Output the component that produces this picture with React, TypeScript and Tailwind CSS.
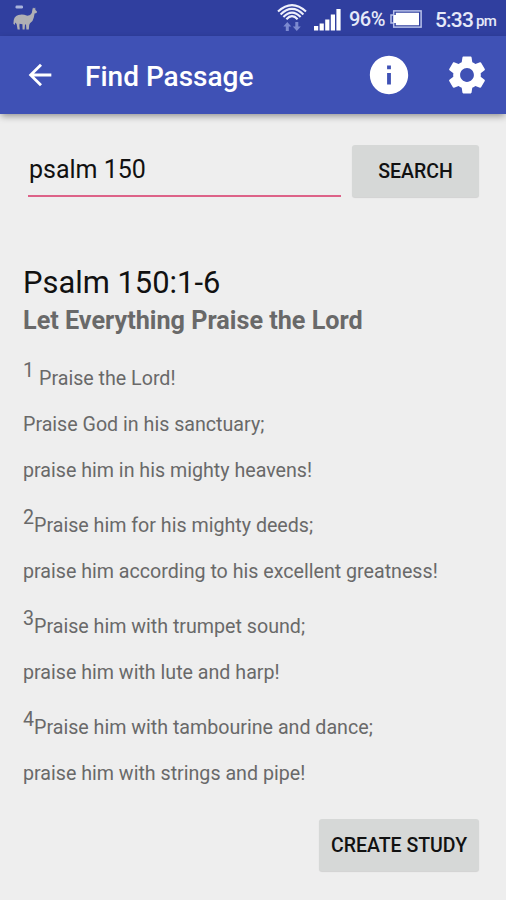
import React from "react";
import { MdArrowBack, MdInfo, MdSettings } from "react-icons/md";

const verses = [
  { number: "1", gap: true, lines: ["Praise the Lord!", "Praise God in his sanctuary;", "praise him in his mighty heavens!"] },
  { number: "2", gap: false, lines: ["Praise him for his mighty deeds;", "praise him according to his excellent greatness!"] },
  { number: "3", gap: false, lines: ["Praise him with trumpet sound;", "praise him with lute and harp!"] },
  { number: "4", gap: false, lines: ["Praise him with tambourine and dance;", "praise him with strings and pipe!"] },
];

function LlamaIcon() {
  return (
    <svg width="26" height="30" viewBox="0 0 26 30" fill="#b0b0b4">
      <rect x="3.5" y="2.5" width="7.5" height="3" rx="1.2" fill="#aab4dc" />
      <path d="M20.4 6.6 L21 4.6 L22 5.4 L23.2 4.4 L23.4 7 L25 8.4 L24.6 10 L22.6 10.4 L21.8 14.4 Q21.2 18 18 20.2 L17.2 22 L16.8 26.6 H14.4 L14 21.4 L13 21.4 L12.6 26.6 H10.6 L10.4 21.2 L7.6 20.8 L7.4 23 L7.8 26.6 H5.6 L4.6 21 L3.2 19.6 L2.8 22 L1.4 20.8 Q1.2 13 6.4 12 Q11 11 14.6 12.6 Q18.4 13 19.8 10 Z" />
    </svg>
  );
}

function WifiIcon() {
  return (
    <svg width="30" height="28" viewBox="0 0 30 28" fill="none">
      <g stroke="#eef0fb" strokeWidth="2.1">
        <path d="M1 7.6 Q15 -5.2 29 7.6" />
        <path d="M3.6 10.4 Q15 -0.6 26.4 10.4" />
        <path d="M6.4 13 Q15 4.2 23.6 13" />
        <path d="M9.4 15.2 Q15 9 20.6 15.2" />
      </g>
      <g fill="#7c8ad0">
        <path d="M10.3 18 L14.3 22.4 H11.8 V27 H8.8 V22.4 H6.3 Z" />
        <path d="M19.8 27 L23.8 22.6 H21.3 V18 H18.3 V22.6 H15.8 Z" />
      </g>
    </svg>
  );
}

function SignalIcon() {
  return (
    <svg width="28" height="24" viewBox="0 0 28 24" fill="#fff">
      <rect x="0" y="18" width="4.2" height="4.5" />
      <rect x="5.6" y="15.5" width="4.2" height="7" />
      <rect x="11.2" y="11.5" width="4.2" height="11" />
      <rect x="16.8" y="6.5" width="4.2" height="16" />
      <rect x="22.4" y="1" width="4.2" height="21.5" />
    </svg>
  );
}

function BatteryIcon() {
  return (
    <svg width="32" height="18" viewBox="0 0 32 18">
      <rect x="3.7" y="0.9" width="27.4" height="16.2" fill="none" stroke="#b9c2ea" strokeWidth="1.5" />
      <path d="M3.5 5 H1 V13 H3.5" fill="none" stroke="#b9c2ea" strokeWidth="1.5" />
      <path d="M5.8 2.8 H29 V15.2 H5.8 V13 H3.6 V5 H5.8 Z" fill="#fff" />
    </svg>
  );
}

function StatusBar() {
  return (
    <div className="flex h-9 items-center bg-[#303f9f] text-[#e6e9f8]">
      <div className="ml-3">
        <LlamaIcon />
      </div>
      <div className="ml-auto flex items-center pr-[10px]">
        <WifiIcon />
        <div className="ml-[7px] pt-[3px]">
          <SignalIcon />
        </div>
        <span className="ml-[7px] mt-[2px] w-[41px] whitespace-nowrap text-[20px] font-medium leading-6 tracking-[-0.5px]">
          96%
        </span>
        <div className="pt-px">
          <BatteryIcon />
        </div>
        <span className="ml-[13px] mt-[3px] text-[21px] font-medium leading-6 tracking-[-0.8px]">5:33</span>
        <span className="ml-[3px] mt-[5px] text-[15px] font-medium leading-5 tracking-[-0.8px]">pm</span>
      </div>
    </div>
  );
}

function Toolbar() {
  return (
    <div className="flex h-[78px] items-center bg-[#3f51b5] text-white shadow-[0_3px_7px_-1px_rgba(0,0,0,0.4)]">
      <MdArrowBack className="ml-[23px] size-[34px]" />
      <h1 className="ml-7 mt-1 text-[28px] font-medium leading-8">Find Passage</h1>
      <MdInfo className="ml-auto size-[46px]" />
      <MdSettings className="ml-8 mr-4 size-[46px]" />
    </div>
  );
}

function GreyButton({ label, className }: { label: string; className: string }) {
  return (
    <button
      className={`flex h-[52px] items-center justify-center whitespace-nowrap rounded-[3px] bg-[#d6d8d7] pt-0.5 text-[19.5px] font-medium text-[#111] shadow-[0_1px_1px_rgba(0,0,0,0.12)] ${className}`}
    >
      {label}
    </button>
  );
}

function App() {
  return (
    <div className="flex h-[900px] w-[506px] flex-col overflow-hidden bg-[#eeeeee] font-['Roboto',sans-serif]">
      <StatusBar />
      <Toolbar />

      <div className="mt-[31px] flex pl-7 pr-[27px]">
        <div className="h-[52px] w-[313px] border-b-2 border-[#dd6288] pl-px text-[25px] leading-[50px] text-[#111]">
          psalm 150
        </div>
        <GreyButton label="SEARCH" className="ml-auto w-[127px]" />
      </div>

      <div className="mt-[66px] pl-[23px] text-[#696969]">
        <h2 className="text-[30.9px] leading-10 text-[#111]">Psalm 150:1-6</h2>
        <h3 className="text-[25.2px] font-bold leading-9">Let Everything Praise the Lord</h3>
        <div className="mt-2 text-[19.65px]">
          {verses.map((verse) => (
            <div key={verse.number}>
              {verse.lines.map((line, index) => (
                <p
                  key={line}
                  className={index === 0 ? "flex h-[55px] items-end leading-[46px]" : "h-[46px] leading-[46px]"}
                >
                  {index === 0 && <span className={verse.gap ? "mr-[5px] pb-2" : "pb-2"}>{verse.number}</span>}
                  <span>{line}</span>
                </p>
              ))}
            </div>
          ))}
        </div>
      </div>

      <GreyButton label="CREATE STUDY" className="mb-[29px] ml-auto mr-[27px] mt-auto w-[160px]" />
    </div>
  );
}

export default App;
